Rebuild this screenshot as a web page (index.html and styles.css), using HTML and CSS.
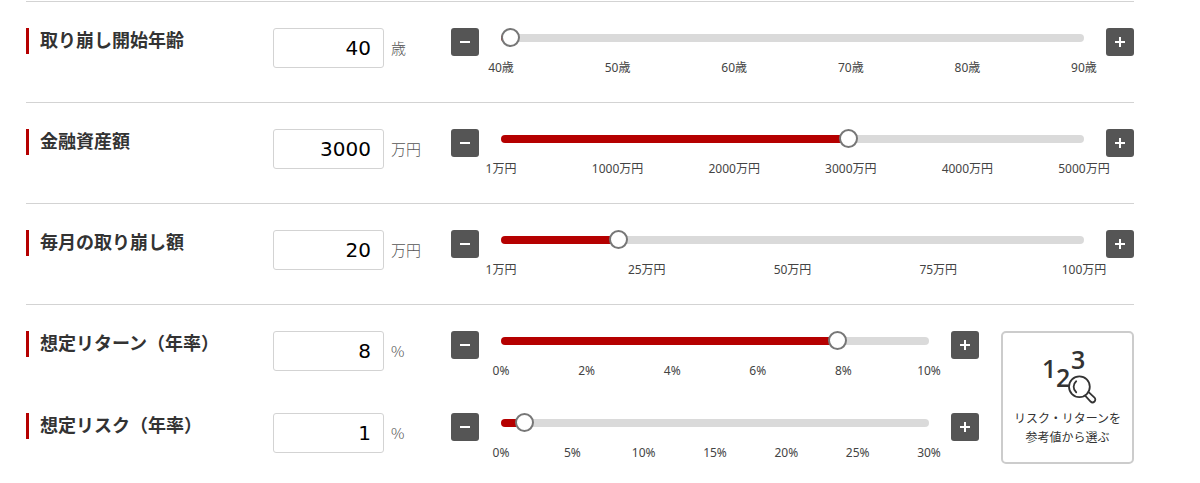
FILE: index.html
```html
<!DOCTYPE html>
<html lang="ja">
<head>
<meta charset="utf-8">
<meta name="viewport" content="width=device-width, initial-scale=1">
<title>取り崩しシミュレーション</title>
<link rel="stylesheet" href="styles.css">
</head>
<body>
<form class="simulator">
  <section class="row">
    <div class="setting">
      <label class="title" for="age">取り崩し開始年齢</label>
      <div class="field"><input class="number" id="age" type="text" inputmode="numeric" value="40"><span class="unit">歳</span></div>
      <button class="step minus" type="button" aria-label="減らす"></button>
      <div class="slider">
        <input class="range" type="range" aria-label="取り崩し開始年齢" min="40" max="90" value="40" style="--ratio: 0">
        <ul class="ticks"><li>40歳</li><li>50歳</li><li>60歳</li><li>70歳</li><li>80歳</li><li>90歳</li></ul>
      </div>
      <button class="step plus" type="button" aria-label="増やす"></button>
    </div>
  </section>

  <section class="row">
    <div class="setting">
      <label class="title" for="assets">金融資産額</label>
      <div class="field"><input class="number" id="assets" type="text" inputmode="numeric" value="3000"><span class="unit">万円</span></div>
      <button class="step minus" type="button" aria-label="減らす"></button>
      <div class="slider">
        <input class="range" type="range" aria-label="金融資産額" min="1" max="5000" value="3000" style="--ratio: 0.6">
        <ul class="ticks"><li>1万円</li><li>1000万円</li><li>2000万円</li><li>3000万円</li><li>4000万円</li><li>5000万円</li></ul>
      </div>
      <button class="step plus" type="button" aria-label="増やす"></button>
    </div>
  </section>

  <section class="row">
    <div class="setting">
      <label class="title" for="monthly">毎月の取り崩し額</label>
      <div class="field"><input class="number" id="monthly" type="text" inputmode="numeric" value="20"><span class="unit">万円</span></div>
      <button class="step minus" type="button" aria-label="減らす"></button>
      <div class="slider">
        <input class="range" type="range" aria-label="毎月の取り崩し額" min="1" max="100" value="20" style="--ratio: 0.192">
        <ul class="ticks"><li>1万円</li><li>25万円</li><li>50万円</li><li>75万円</li><li>100万円</li></ul>
      </div>
      <button class="step plus" type="button" aria-label="増やす"></button>
    </div>
  </section>

  <section class="row">
    <div class="settings">
      <div class="setting">
        <label class="title" for="return">想定リターン（年率）</label>
        <div class="field"><input class="number" id="return" type="text" inputmode="numeric" value="8"><span class="unit">%</span></div>
        <button class="step minus" type="button" aria-label="減らす"></button>
        <div class="slider">
          <input class="range" type="range" aria-label="想定リターン（年率）" min="0" max="10" value="8" style="--ratio: 0.8">
          <ul class="ticks"><li>0%</li><li>2%</li><li>4%</li><li>6%</li><li>8%</li><li>10%</li></ul>
        </div>
        <button class="step plus" type="button" aria-label="増やす"></button>
      </div>
      <div class="setting">
        <label class="title" for="risk">想定リスク（年率）</label>
        <div class="field"><input class="number" id="risk" type="text" inputmode="numeric" value="1"><span class="unit">%</span></div>
        <button class="step minus" type="button" aria-label="減らす"></button>
        <div class="slider">
          <input class="range" type="range" aria-label="想定リスク（年率）" min="0" max="30" value="1" style="--ratio: 0.033">
          <ul class="ticks"><li>0%</li><li>5%</li><li>10%</li><li>15%</li><li>20%</li><li>25%</li><li>30%</li></ul>
        </div>
        <button class="step plus" type="button" aria-label="増やす"></button>
      </div>
    </div>
    <button class="reference" type="button">
      <svg class="reference-icon" viewBox="0 0 56 56" aria-hidden="true">
        <g class="digits">
          <text x="2" y="29">1</text>
          <text x="16" y="38">2</text>
          <text x="31" y="20">3</text>
        </g>
        <g class="lens">
          <path d="M45.6 47.2 L50.6 52.5 A2.7 2.7 0 0 0 54.5 48.6 L49.2 43.6"/>
          <circle cx="39.4" cy="37.8" r="10.4"/>
          <path d="M36.2 32.3 A7.2 7.2 0 0 0 36.2 43.3"/>
        </g>
      </svg>
      <span>リスク・リターンを<br>参考値から選ぶ</span>
    </button>
  </section>
</form>
</body>
</html>
```
FILE: styles.css
```css
* {
  box-sizing: border-box;
}

body {
  margin: 0;
  background: #fff;
  color: #333;
  font-family: "Noto Sans", "Noto Sans CJK JP", sans-serif;
}

.simulator {
  padding: 1px 66px 0 26px;
}

.row {
  display: flex;
  align-items: flex-start;
  gap: 22px;
  padding: 26px 0;
  border-top: 1px solid #d3d3d3;
}

.settings {
  flex: 1;
  display: grid;
  gap: 34px;
}

.setting {
  flex: 1;
  display: grid;
  grid-template-columns: 247px 178px 28px 1fr 28px;
  align-items: start;
  height: 48px;
}

.title {
  height: 26px;
  padding-left: 11px;
  border-left: 3px solid #b50000;
  font-family: "Noto Sans CJK JP", sans-serif;
  font-size: 18px;
  font-weight: 700;
  line-height: 22px;
  white-space: nowrap;
}

.field {
  display: flex;
  align-items: center;
  gap: 7px;
}

.number {
  width: 111px;
  height: 40px;
  padding: 0 12px;
  border: 1px solid #d3d3d3;
  border-radius: 3px;
  background: #fff;
  color: #000;
  font-family: "DejaVu Sans", sans-serif;
  font-size: 20px;
  text-align: right;
}

.unit {
  color: #555;
  font-family: "Noto Sans CJK JP", sans-serif;
  font-size: 15px;
  font-weight: 300;
  line-height: 20px;
}

.step {
  display: grid;
  place-items: center;
  width: 28px;
  height: 28px;
  padding: 0;
  border: 0;
  border-radius: 3px;
  background: #555;
}

.step::before,
.plus::after {
  grid-area: 1 / 1;
  width: 10px;
  height: 2px;
  background: #fff;
  content: "";
}

.plus::after {
  width: 2px;
  height: 10px;
}

.slider {
  margin: 0 22px;
}

.range {
  display: block;
  width: 100%;
  height: 20px;
  margin: 0;
  appearance: none;
  background: none;
}

.range::-webkit-slider-runnable-track {
  --fill: calc((100% - 20px) * var(--ratio) + 10px);
  height: 8px;
  border-radius: 4px;
  background: linear-gradient(to right, #b50000 var(--fill), #dadada var(--fill));
}

.range::-webkit-slider-thumb {
  width: 19px;
  height: 19px;
  margin-top: -6px;
  border: 2px solid #777;
  border-radius: 50%;
  appearance: none;
  background: #fff;
}

.ticks {
  display: flex;
  justify-content: space-between;
  margin: 12px 0 0;
  padding: 0;
  color: #444;
  font-size: 12px;
  line-height: 16px;
  list-style: none;
}

.ticks li {
  display: flex;
  justify-content: center;
  width: 0;
  white-space: nowrap;
}

.reference {
  display: flex;
  flex-direction: column;
  align-items: center;
  gap: 3px;
  width: 133px;
  height: 133px;
  padding: 16px 0 0;
  border: 2px solid #ccc;
  border-radius: 5px;
  background: #fff;
  color: #333;
  font-family: "Noto Sans CJK JP", sans-serif;
  font-size: 12px;
  line-height: 19px;
}

.reference-icon {
  width: 56px;
  height: 56px;
  overflow: visible;
}

.digits {
  fill: #333;
  font-family: "Open Sans", sans-serif;
  font-size: 25px;
  font-weight: 600;
}

.lens {
  fill: #fff;
  stroke: #333;
  stroke-width: 1.8;
  stroke-linecap: round;
}
```
